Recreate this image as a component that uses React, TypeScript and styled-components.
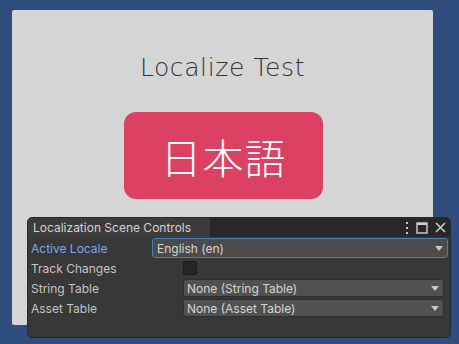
import styled, { createGlobalStyle } from "styled-components";

const GlobalStyle = createGlobalStyle`
  html, body { margin: 0; padding: 0; }
  body { background: #2f4e7d; }
`;

const rows = [
  { id: "locale", label: "Active Locale", kind: "select", value: "English (en)", active: true },
  { id: "track", label: "Track Changes", kind: "toggle", value: "" },
  { id: "string", label: "String Table", kind: "select", value: "None (String Table)" },
  { id: "asset", label: "Asset Table", kind: "select", value: "None (Asset Table)" },
];

export default function App() {
  return (
    <>
      <GlobalStyle />
      <Scene>
        <Canvas>
          <Title>Localize Test</Title>
          <LangButton>日本語</LangButton>
        </Canvas>
        <Overlay>
          <TitleBar>
            <Tab>Localization Scene Controls</Tab>
            <WindowIcons>
              <svg width="4" height="12" viewBox="0 0 4 12">
                <rect x="1" y="0" width="2" height="2" fill="#c8c8c8" />
                <rect x="1" y="5" width="2" height="2" fill="#c8c8c8" />
                <rect x="1" y="10" width="2" height="2" fill="#c8c8c8" />
              </svg>
              <svg width="12" height="12" viewBox="0 0 12 12">
                <rect x="1" y="1" width="10" height="10" fill="none" stroke="#d0d0d0" strokeWidth="1.4" />
                <rect x="1" y="1" width="10" height="2" fill="#d0d0d0" />
              </svg>
              <svg width="11" height="11" viewBox="0 0 11 11">
                <path d="M1 1 L10 10 M10 1 L1 10" stroke="#d0d0d0" strokeWidth="1.5" />
              </svg>
            </WindowIcons>
          </TitleBar>
          <Body>
            {rows.map((r) => (
              <Row key={r.id}>
                <Label $active={!!r.active}>{r.label}</Label>
                {r.kind === "select" ? (
                  <Select $active={!!r.active}>
                    <span>{r.value}</span>
                    <Caret />
                  </Select>
                ) : (
                  <ToggleCell>
                    <Checkbox />
                  </ToggleCell>
                )}
              </Row>
            ))}
          </Body>
        </Overlay>
      </Scene>
    </>
  );
}

// styling
const Scene = styled.div`
  position: relative;
  width: 459px;
  height: 344px;
  box-sizing: border-box;
  padding: 10px 26px 19px 12px;
  background: #2f4e7d;
  overflow: hidden;
`;

const Canvas = styled.div`
  height: 100%;
  background: #d5d5d5;
  border-radius: 2px;
  display: flex;
  flex-direction: column;
  align-items: center;
  padding-top: 45px;
  box-sizing: border-box;
`;

const Title = styled.div`
  font-family: "DejaVu Sans", sans-serif;
  font-weight: 300;
  font-size: 25px;
  letter-spacing: 0.6px;
  color: #333333;
  line-height: 26px;
`;

const LangButton = styled.div`
  margin-top: 31px;
  margin-left: 2px;
  width: 199px;
  height: 87px;
  border-radius: 12px;
  background: #dc4062;
  color: #ffffff;
  display: flex;
  align-items: center;
  justify-content: center;
  font-family: "Noto Sans CJK JP", sans-serif;
  font-weight: 300;
  font-size: 41px;
  letter-spacing: 1px;
`;

const Overlay = styled.div`
  position: absolute;
  left: 27px;
  top: 217px;
  width: 424px;
  height: 121px;
  box-sizing: border-box;
  background: #383838;
  border: 1px solid #1f2a3a;
  border-radius: 5px;
  overflow: hidden;
  font-family: Inter, "Noto Sans", sans-serif;
  font-size: 12px;
  color: #c4c4c4;
`;

const TitleBar = styled.div`
  height: 19px;
  background: #282828;
  display: flex;
  align-items: stretch;
  justify-content: space-between;
`;

const Tab = styled.div`
  width: 177px;
  background: #3c3c3c;
  color: #d2d2d2;
  padding-left: 5px;
  line-height: 20px;
  border-top-right-radius: 2px;
`;

const WindowIcons = styled.div`
  display: flex;
  align-items: center;
  gap: 7px;
  padding-right: 4px;
`;

const Body = styled.div`
  padding: 1px 2px 0 3px;
  display: flex;
  flex-direction: column;
`;

const Row = styled.div`
  height: 20px;
  display: flex;
  align-items: center;
`;

const Label = styled.div<{ $active: boolean }>`
  width: 121px;
  flex-shrink: 0;
  color: ${(p) => (p.$active ? "#7ea6e6" : "#c4c4c4")};
`;

const Select = styled.div<{ $active: boolean }>`
  flex: 1;
  height: ${(p) => (p.$active ? "20px" : "18px")};
  margin-left: ${(p) => (p.$active ? "0" : "31px")};
  margin-right: ${(p) => (p.$active ? "0" : "4px")};
  box-sizing: border-box;
  background: ${(p) => (p.$active ? "#4b4b4b" : "#515151")};
  border: 1px solid ${(p) => (p.$active ? "#4b7bb8" : "#2e2e2e")};
  border-radius: 3px;
  display: flex;
  align-items: center;
  justify-content: space-between;
  padding: 0 4px 0 ${(p) => (p.$active ? "4px" : "3px")};
  color: #d4d4d4;
`;

const Caret = styled.div`
  width: 0;
  height: 0;
  border-left: 4px solid transparent;
  border-right: 4px solid transparent;
  border-top: 5px solid #c8c8c8;
`;

const ToggleCell = styled.div`
  flex: 1;
  padding-left: 31px;
  display: flex;
  align-items: center;
`;

const Checkbox = styled.div`
  width: 14px;
  height: 14px;
  box-sizing: border-box;
  background: #252525;
  border: 1px solid #1a1a1a;
  border-radius: 2px;
`;
